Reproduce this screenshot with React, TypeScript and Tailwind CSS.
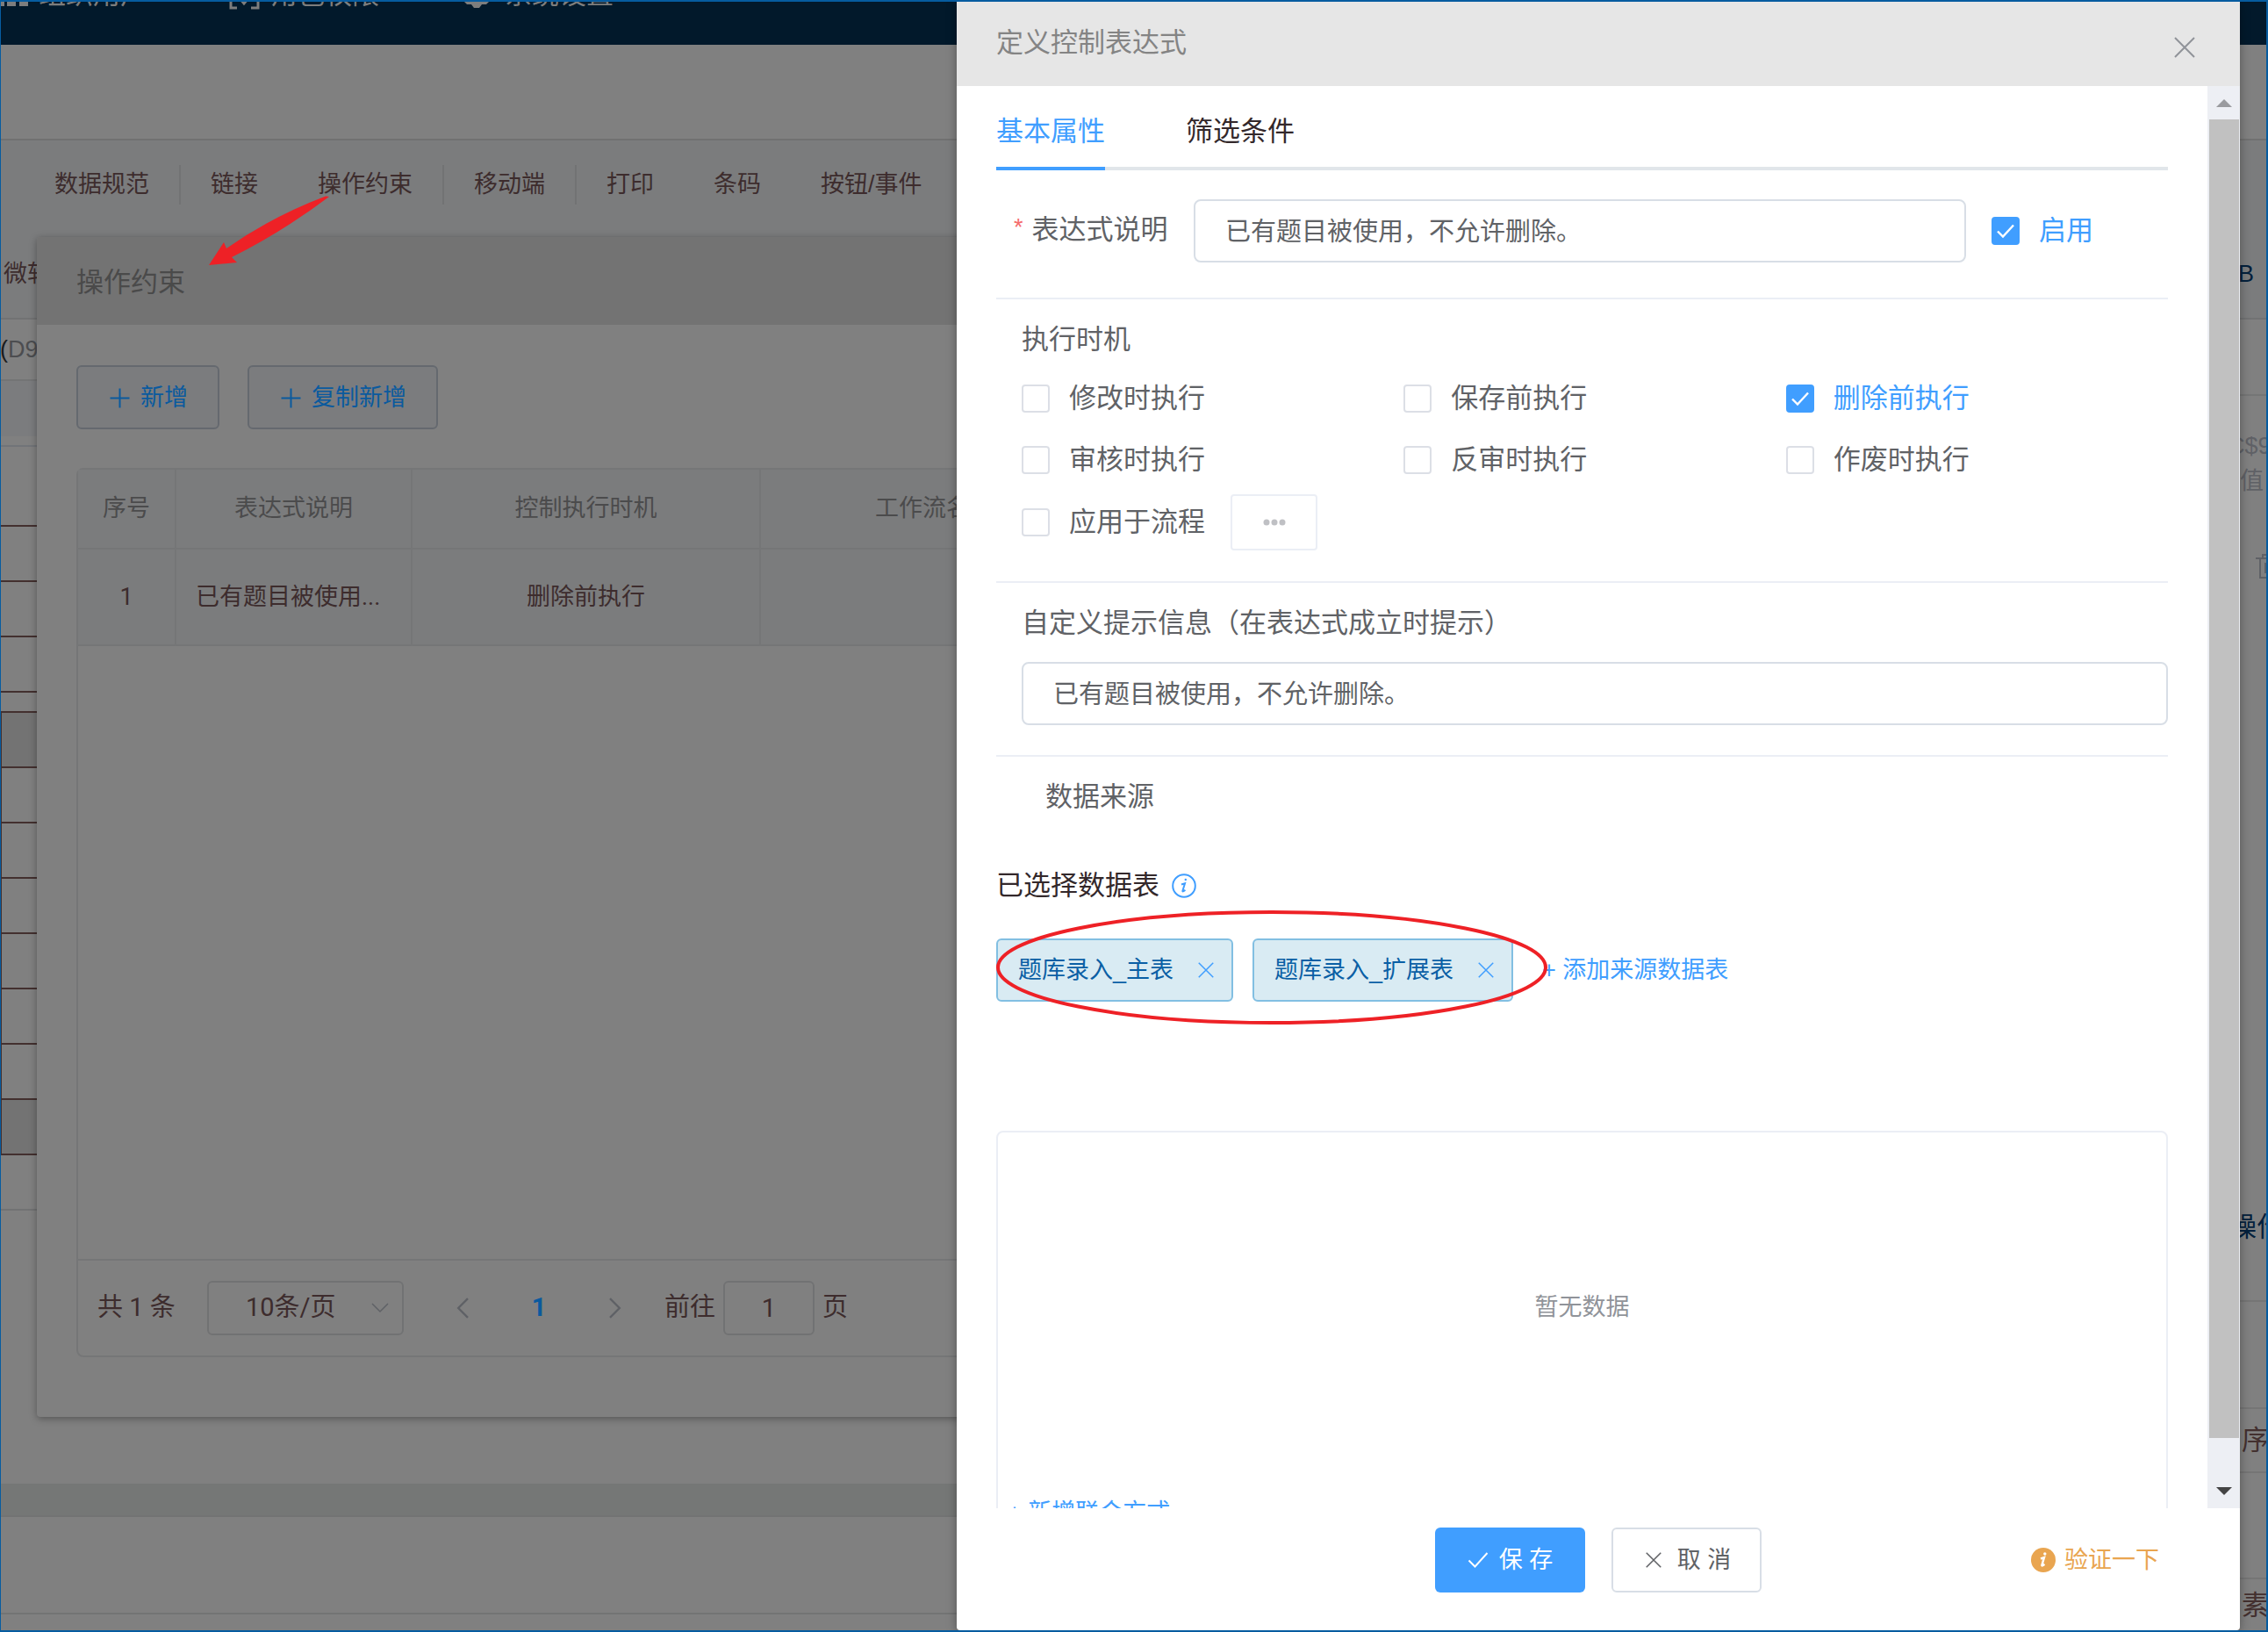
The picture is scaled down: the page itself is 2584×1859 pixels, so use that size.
import { ReactNode, useState } from 'react';

const triggers = [
  { id: 'update', label: '修改时执行' },
  { id: 'save', label: '保存前执行' },
  { id: 'delete', label: '删除前执行' },
  { id: 'audit', label: '审核时执行' },
  { id: 'unaudit', label: '反审时执行' },
  { id: 'void', label: '作废时执行' },
];

const sheetRows = [
  'h-[91px] border-[#43302f]',
  'h-[63px] border-[#43302f]',
  'h-[63px] border-[#43302f]',
  'h-[63px] border-[#43302f]',
  'h-[23px] border-[#43302f]',
  'h-[63px] border-l-2 border-[#43302f] bg-[#737373]',
  'h-[63px] border-l-2 border-[#43302f]',
  'h-[63px] border-l-2 border-[#43302f]',
  'h-[63px] border-l-2 border-[#43302f]',
  'h-[63px] border-l-2 border-[#43302f]',
  'h-[63px] border-l-2 border-[#43302f]',
  'h-[63px] border-l-2 border-[#43302f]',
  'h-[63px] border-l-2 border-[#43302f] bg-[#737373]',
  'h-[63px] border-[#717273]',
];

function PlusIcon() {
  return (
    <svg viewBox="0 0 27 27" className="size-[27px]" fill="none" stroke="currentColor" strokeWidth="2">
      <path d="M13.5 2.5v22M2.5 13.5h22" />
    </svg>
  );
}

function CloseIcon({ className }: { className: string }) {
  return (
    <svg viewBox="0 0 24 24" className={className} fill="none" stroke="currentColor" strokeWidth="2">
      <path d="M1 1l22 22M23 1L1 23" />
    </svg>
  );
}

function Chevron({ d, className }: { d: string; className: string }) {
  return (
    <svg viewBox="0 0 20 20" className={className} fill="none" stroke="currentColor" strokeWidth="1.5">
      <path d={d} />
    </svg>
  );
}

function NavLink({ children }: { children: ReactNode }) {
  return (
    <a href="#" className="px-[34px]">
      {children}
    </a>
  );
}

function NavDivider() {
  return <span className="h-[45px] w-0.5 bg-[#727374]" />;
}

function Check({ label, checked, onChange }: { label: string; checked: boolean; onChange: () => void }) {
  return (
    <label className={`flex items-center gap-[22px] text-[31px] leading-10 ${checked ? 'text-[#409eff]' : 'text-[#606266]'}`}>
      <span className="grid size-8 place-items-center">
        <input
          type="checkbox"
          checked={checked}
          onChange={onChange}
          className="col-start-1 row-start-1 size-8 appearance-none rounded-sm border-2 border-[#dcdfe6] bg-white checked:border-[#409eff] checked:bg-[#409eff]"
        />
        {checked && (
          <svg viewBox="0 0 32 32" className="pointer-events-none col-start-1 row-start-1 size-8" fill="none" stroke="white" strokeWidth="2.4">
            <path d="M7 16.5l6 6L25 9.5" />
          </svg>
        )}
      </span>
      {label}
    </label>
  );
}

function Tag({ name }: { name: string }) {
  return (
    <span className="flex h-[72px] items-center gap-7 rounded-md border-2 border-[#82bfe2] bg-[#d9ebf3] pr-5 pl-[23px] text-[27px] text-[#0a5fa5]">
      {name}
      <button type="button" aria-label={`移除 ${name}`} className="text-[#409eff]">
        <CloseIcon className="size-[18px]" />
      </button>
    </span>
  );
}

function BackgroundPage() {
  return (
    <div className="flex h-full flex-col bg-[#808080] text-[#3d2c2d]">
      <header className="h-[51px] overflow-hidden bg-[#02192b] text-[#7d7d7d]">
        <nav className="-mt-[26px] flex items-center text-[31px] leading-10">
          <a href="#" className="flex w-[260px] items-center gap-3">
            <svg viewBox="0 0 32 32" className="size-8" fill="currentColor">
              <path d="M-4 0h9v29h-9zM8 0h10v29H8zM22 0h10v29H22z" />
            </svg>
            组织用户
          </a>
          <a href="#" className="flex w-[267px] items-center gap-3">
            <svg viewBox="0 0 36 36" className="size-9" fill="none" stroke="currentColor" strokeWidth="3">
              <path d="M10 3H3v30h7M26 3h8v30h-8M13 22l5 6 5-6" />
            </svg>
            角色权限
          </a>
          <a href="#" className="flex items-center gap-4">
            <svg viewBox="0 0 32 32" className="size-8" fill="currentColor">
              <path d="M16 0l6 4 7-1 1 8 2 5-1 7-4 4h-5l-3 4h-6l-3-4H5l-4-4-1-7 2-5 1-8 7 1z" />
            </svg>
            系统设置
          </a>
        </nav>
      </header>
      <div className="h-[109px] shrink-0 border-b-2 border-[#717171]" />
      <div className="h-[204px] shrink-0 border-b-2 border-[#717273] bg-[#7b7c7d] text-[27px]">
        <nav className="flex h-[100px] items-center pl-7">
          <NavLink>数据规范</NavLink>
          <NavDivider />
          <NavLink>链接</NavLink>
          <NavLink>操作约束</NavLink>
          <NavDivider />
          <NavLink>移动端</NavLink>
          <NavDivider />
          <NavLink>打印</NavLink>
          <NavLink>条码</NavLink>
          <NavLink>按钮/事件</NavLink>
        </nav>
        <div className="flex h-[104px] items-center justify-between pr-4 pl-1">
          <span>微软</span>
          <span className="text-[#03203c]">DB</span>
        </div>
      </div>
      <div className="flex min-h-0 flex-1">
        <div className="min-w-0 flex-1">
          <div className="h-[70px] border-b-2 border-[#737475] text-[27px] leading-[68px] text-[#4c4d50]">
            <span className="text-[#1c1c1c]">(</span>D9
          </div>
          <div className="h-[63px] bg-[#7b7c7e]" />
          <div className="h-3 border-b-2 border-[#717478]" />
          {sheetRows.map((row, i) => (
            <div key={i} className={`border-b-2 ${row}`} />
          ))}
          <div className="mt-[311px] h-[38px] border-b-2 border-[#727373] bg-[#757776]" />
          <div className="h-[111px] border-b-2 border-[#737474]" />
        </div>
        <div className="flex w-[52px] flex-col overflow-hidden text-[27px] leading-10 whitespace-nowrap text-[#5f6166]">
          <div className="h-[87px] shrink-0 border-b-2 border-[#747575]" />
          <div className="pt-[37px] pl-1.5">C$9</div>
          <div className="pl-5">值</div>
          <div className="mt-[57px] flex h-10 items-center pl-[38px]">
            <svg viewBox="0 0 28 28" className="size-7 shrink-0" fill="none" stroke="currentColor" strokeWidth="2">
              <path d="M0 5h28M8 5V1h12v4M5 5v22h18V5M11 11h6v10h-6z" />
            </svg>
          </div>
          <div className="mt-[713px] pl-2 text-[31px] text-[#03203c]">操作</div>
          <div className="h-[65px] shrink-0 border-b-2 border-[#757575]" />
          <div className="h-[122px] shrink-0 border-b-2 border-[#757575]" />
          <div className="h-[73px] shrink-0 border-b-2 border-[#757575] pt-4 pl-[22px] text-[31px] text-[#43302f]">序号</div>
          <div className="h-[121px] shrink-0 border-b-2 border-[#757575]" />
          <div className="pt-2.5 pl-[22px] text-[31px] text-[#43302f]">素材</div>
        </div>
      </div>
    </div>
  );
}

function ConstraintDialog() {
  const cell = 'border-r-2 border-b-2 border-[#757677] font-normal';
  const addButton =
    'flex h-[73px] items-center gap-2.5 rounded-md border-2 border-[#65696f] bg-[#7b7c7e] px-[34px] pt-0.5 text-[27px] text-[#0a5a9e]';

  return (
    <section className="absolute top-[270px] right-16 left-[42px] rounded bg-[#808080] text-[#3d2c2d] shadow-[0_2px_8px_rgba(0,0,0,0.35)]">
      <h2 className="h-[100px] rounded-t bg-[#737373] px-[45px] text-[31px] leading-[103px] text-[#4a4a4a]">操作约束</h2>
      <div className="px-[45px] pt-[46px] pb-[68px] font-['Roboto','Noto_Sans_CJK_SC',sans-serif]">
        <div className="flex gap-8">
          <button type="button" className={addButton}>
            <PlusIcon />
            新增
          </button>
          <button type="button" className={addButton}>
            <PlusIcon />
            复制新增
          </button>
        </div>

        <div className="mt-11 rounded-lg border-2 border-[#757677]">
          <div className="h-[899px]">
            <table className="w-full table-fixed border-separate border-spacing-0 bg-[#7b7c7d] text-center text-[27px]">
              <colgroup>
                <col className="w-[112px]" />
                <col className="w-[269px]" />
                <col className="w-[397px]" />
                <col className="w-[397px]" />
                <col />
              </colgroup>
              <thead className="h-[91px] text-[#4b4b4c]">
                <tr>
                  <th className={cell}>序号</th>
                  <th className={cell}>表达式说明</th>
                  <th className={cell}>控制执行时机</th>
                  <th className={cell}>工作流名称</th>
                  <th className={cell} />
                </tr>
              </thead>
              <tbody>
                <tr className="h-[110px]">
                  <td className={cell}>1</td>
                  <td className={`${cell} pl-[22px] text-left`}>已有题目被使用...</td>
                  <td className={cell}>删除前执行</td>
                  <td className={cell} />
                  <td className={cell} />
                </tr>
              </tbody>
            </table>
          </div>

          <div className="flex h-[110px] items-center border-t-2 border-[#757677] pl-[22px] text-[29px]">
            <span className="w-[125px]">共 1 条</span>
            <div className="grid items-center">
              <select
                aria-label="每页条数"
                className="col-start-1 row-start-1 h-[62px] w-56 appearance-none rounded-md border-2 border-[#717273] bg-transparent pl-[42px]"
              >
                <option>10条/页</option>
              </select>
              <Chevron d="M1 5l9 9 9-9" className="pointer-events-none col-start-1 row-start-1 mr-[17px] size-5 justify-self-end text-[#5f6166]" />
            </div>
            <button type="button" aria-label="上一页" className="ml-[55px] text-[#5f6166]">
              <Chevron d="M15 1L6 10l9 9" className="size-6 stroke-2" />
            </button>
            <button type="button" className="w-[150px] font-bold text-[#0a5a9e]">
              1
            </button>
            <button type="button" aria-label="下一页" className="text-[#5f6166]">
              <Chevron d="M5 1l9 9-9 9" className="size-6 stroke-2" />
            </button>
            <label className="ml-11 flex items-center gap-[9px]">
              前往
              <input defaultValue="1" className="h-[62px] w-[104px] rounded-md border-2 border-[#717273] text-center" />
              页
            </label>
          </div>
        </div>
      </div>
    </section>
  );
}

function ExpressionDrawer() {
  const [enabled, setEnabled] = useState(true);
  const [active, setActive] = useState<string[]>(['delete']);

  function toggle(id: string) {
    setActive((prev) => (prev.includes(id) ? prev.filter((x) => x !== id) : [...prev, id]));
  }

  const inputClass =
    'h-[72px] w-full rounded-lg border-2 border-[#d8dee6] bg-white px-[34px] pb-1 text-[29px] text-[#606266] focus:outline-none';

  return (
    <section className="absolute top-0.5 right-8 bottom-0.5 left-[1090px] flex flex-col rounded bg-white shadow-[0_2px_12px_rgba(0,0,0,0.35)]">
      <header className="flex h-24 shrink-0 items-center justify-between bg-[#e6e6e6] pr-[51px] pl-[45px]">
        <h2 className="pb-0.5 text-[31px] text-[#848484]">定义控制表达式</h2>
        <button type="button" aria-label="关闭" className="pt-2 text-[#909399]">
          <CloseIcon className="size-6" />
        </button>
      </header>

      <div className="flex min-h-0 flex-1">
        <div className="min-w-0 flex-1 overflow-hidden px-[45px]">
          {/* Tabs */}
          <div role="tablist" className="flex h-24 gap-[92px] text-[31px] shadow-[inset_0_-4px_0_#e1e6ea]">
            <button type="button" role="tab" aria-selected="true" className="border-b-4 border-[#409eff] pt-3 text-[#409eff]">
              基本属性
            </button>
            <button type="button" role="tab" aria-selected="false" className="border-b-4 border-transparent pt-3 text-[#33282b]">
              筛选条件
            </button>
          </div>

          <div className="flex h-[147px] items-center border-b-2 border-[#ebeef5] pb-2">
            <label htmlFor="expr-name" className="flex w-[225px] shrink-0 gap-2.5 pl-5 text-[31px] text-[#606266]">
              <span className="text-[27px] text-[#f56c6c]">*</span>
              表达式说明
            </label>
            <input id="expr-name" defaultValue="已有题目被使用，不允许删除。" className={inputClass} />
            <div className="w-[230px] shrink-0 pl-[29px]">
              <Check label="启用" checked={enabled} onChange={() => setEnabled(!enabled)} />
            </div>
          </div>

          {/* Triggers */}
          <fieldset className="h-[323px] border-b-2 border-[#ebeef5] pt-[26px] pl-[29px] text-[#606266]">
            <legend className="float-left w-full text-[31px] leading-10">执行时机</legend>
            <div className="clear-both grid grid-cols-3 gap-y-[30px] pt-[27px]">
              {triggers.map((t) => (
                <Check key={t.id} label={t.label} checked={active.includes(t.id)} onChange={() => toggle(t.id)} />
              ))}
            </div>
            <div className="mt-[19px] flex items-center gap-[29px]">
              <Check label="应用于流程" checked={active.includes('flow')} onChange={() => toggle('flow')} />
              <button
                type="button"
                aria-label="选择流程"
                className="flex h-16 w-[99px] items-center justify-center rounded border-2 border-[#ebeef5]"
              >
                <svg viewBox="0 0 26 8" className="h-2 w-[26px]" fill="#bfc0c4">
                  <circle cx="4" cy="4" r="3.5" />
                  <circle cx="13" cy="4" r="3.5" />
                  <circle cx="22" cy="4" r="3.5" />
                </svg>
              </button>
            </div>
          </fieldset>

          <div className="h-[198px] border-b-2 border-[#ebeef5] pt-[26px] pl-[29px]">
            <label htmlFor="expr-tip" className="block pb-6 text-[31px] leading-10 text-[#606266]">
              自定义提示信息（在表达式成立时提示）
            </label>
            <input id="expr-tip" defaultValue="已有题目被使用，不允许删除。" className={inputClass} />
          </div>

          {/* Data sources */}
          <h3 className="pt-[26px] pl-14 text-[31px] leading-10 text-[#606266]">数据来源</h3>
          <div className="mt-[61px] flex items-center gap-3.5 text-[31px] leading-10 text-[#33282b]">
            已选择数据表
            <svg viewBox="0 0 28 28" className="size-7 text-[#409eff]" fill="none" stroke="currentColor" strokeWidth="2">
              <circle cx="14" cy="14" r="12.8" />
              <path d="M11 12.500l4-1.300-2.600 8.500q-.4 1.800 3-.9" />
              <circle cx="15.800" cy="7" r="1.200" fill="currentColor" stroke="none" />
            </svg>
          </div>
          <div className="relative mt-10 flex items-center gap-[22px]">
            <Tag name="题库录入_主表" />
            <Tag name="题库录入_扩展表" />
            <button type="button" className="ml-[11px] text-[27px] text-[#409eff]">
              + 添加来源数据表
            </button>
            <svg viewBox="0 0 632 134" className="pointer-events-none absolute -top-[34px] -left-0.5 h-[134px] w-[632px]" fill="none" stroke="#ee2126" strokeWidth="4">
              <ellipse cx="316" cy="67" rx="312" ry="63" />
            </svg>
          </div>

          <div className="mt-[147px] h-[600px] rounded-lg border-2 border-[#ebeef5]">
            <p className="h-[413px] pt-[179px] text-center text-[27px] leading-10 text-[#909399]">暂无数据</p>
            <button type="button" className="pl-[11px] text-[27px] leading-10 text-[#409eff]">
              + 新增联合方式
            </button>
          </div>
        </div>

        {/* Scrollbar */}
        <div className="flex w-[37px] flex-col items-center bg-[#edeff4]">
          <svg viewBox="0 0 18 9" className="mt-[15px] mb-3.5 h-[9px] w-[18px] shrink-0" fill="#9a9b9f">
            <path d="M0 9L9 0l9 9z" />
          </svg>
          <div className="w-[34px] flex-1 bg-[#c1c1c1]" />
          <svg viewBox="0 0 18 9" className="mt-14 mb-[15px] h-[9px] w-[18px] shrink-0" fill="#444444">
            <path d="M0 0l9 9 9-9z" />
          </svg>
        </div>
      </div>

      <footer className="grid h-[139px] shrink-0 grid-cols-[1fr_auto_1fr] items-start pt-[22px] text-[27px]">
        <div className="col-start-2 flex gap-[30px]">
          <button type="button" className="flex h-[74px] w-[171px] items-center justify-center gap-3 rounded-md bg-[#409eff] text-white">
            <svg viewBox="0 0 24 24" className="size-6" fill="none" stroke="currentColor" strokeWidth="2">
              <path d="M1.500 12.500l7 7L22.500 4" />
            </svg>
            保 存
          </button>
          <button
            type="button"
            className="flex h-[74px] w-[171px] items-center justify-center gap-[18px] rounded-md border-2 border-[#d8dee6] pl-1 text-[#606266]"
          >
            <CloseIcon className="size-[18px]" />
            取 消
          </button>
        </div>
        <button type="button" className="flex h-[74px] items-center gap-2.5 justify-self-end pr-[92px] text-[#e9a550]">
          <svg viewBox="0 0 28 28" className="size-7">
            <circle cx="14" cy="14" r="14" fill="currentColor" />
            <path d="M11 12.500l4-1.300-2.600 8.500q-.4 1.800 3-.9" fill="none" stroke="white" strokeWidth="2.400" />
            <circle cx="15.800" cy="7" r="1.700" fill="white" />
          </svg>
          验证一下
        </button>
      </footer>
    </section>
  );
}

export default function App() {
  return (
    <main className="relative h-screen overflow-hidden font-['Liberation_Sans','Noto_Sans_CJK_SC',sans-serif]">
      <BackgroundPage />
      <ConstraintDialog />
      <svg viewBox="0 0 140 82" className="pointer-events-none absolute top-[222px] left-[237px] h-[82px] w-[140px]" fill="#ee2126">
        <path d="M1 80L18 54l3 7Q72 25 134 1.500L138 2Q85 42 27 71l6 6z" />
      </svg>
      <ExpressionDrawer />
      <div className="pointer-events-none absolute inset-0 border-2 border-l border-[#065ca0]" />
    </main>
  );
}
